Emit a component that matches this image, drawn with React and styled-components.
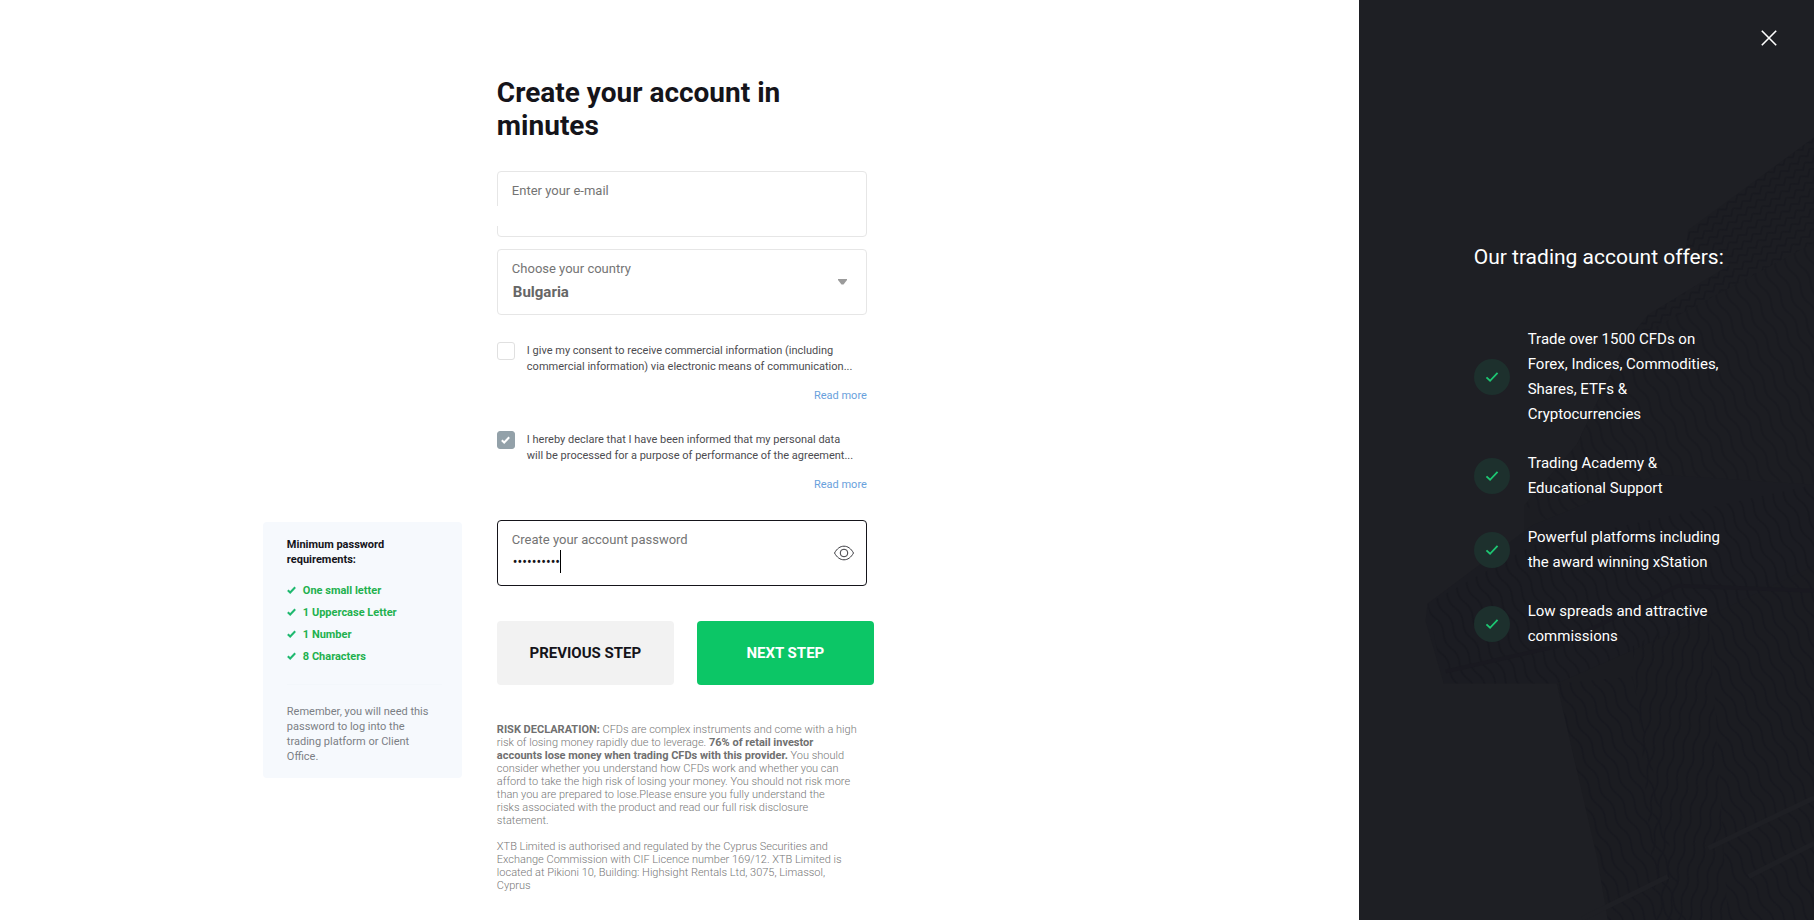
import { useState } from 'react';
import styled, { createGlobalStyle, css } from 'styled-components';

const GlobalStyle = createGlobalStyle`
    * {
        box-sizing: border-box;
    }

    body {
        margin: 0;
        background: #fff;
        color: #15141a;
        font-family: Roboto, 'Liberation Sans', sans-serif;
    }

    button, input, select {
        font-family: inherit;
    }
`;

const Page = styled.div`
    display: flex;
    min-height: 100vh;
`;

const Main = styled.main`
    flex: 1;
    display: flex;
    justify-content: center;
    padding: 76px 24px 24px 29px;
`;

const Form = styled.form`
    width: 100%;
    max-width: 370px;
`;

const Heading = styled.h1`
    margin: 0 0 29px;
    font-size: 28px;
    line-height: 33px;
    font-weight: 700;
`;

const Field = styled.div`
    position: relative;
    display: flex;
    flex-direction: column;
    height: 66px;
    margin-bottom: 12px;
    padding: 10px 14px;
    border: 1px solid ${(props) => (props.$focused ? '#15141a' : '#e6e6e6')};
    border-radius: 4px;
`;

const FieldLabel = styled.label`
    font-size: 13px;
    line-height: 18px;
    color: #747474;
`;

const EmailInput = styled.input`
    height: 21px;
    margin: 6px 0 0 -15px;
    padding: 0 16px;
    border: 0;
    outline: 0;
    background: #fff;
    font-size: 15px;
`;

const CountrySelect = styled.select`
    appearance: none;
    height: 26px;
    margin-top: 2px;
    padding: 0 0 0 1px;
    border: 0;
    outline: 0;
    background: transparent;
    color: #666;
    font-size: 15px;
    font-weight: 700;
`;

const PasswordInput = styled.input`
    height: 24px;
    margin-top: 1px;
    padding: 0 40px 0 1px;
    border: 0;
    outline: 0;
    background: transparent;
    color: #15141a;
    font-size: 14px;
`;

const Caret = styled.span`
    position: absolute;
    left: 62px;
    top: 29px;
    width: 1px;
    height: 23px;
    background: #000;
`;

const Arrow = styled.svg`
    position: absolute;
    right: 19px;
    top: 29px;
    pointer-events: none;
`;

const EyeButton = styled.button`
    position: absolute;
    right: 12px;
    top: 24px;
    display: flex;
    padding: 0;
    border: 0;
    background: none;
    cursor: pointer;
`;

const Consents = styled.div`
    margin-top: 27px;
`;

const Consent = styled.div`
    display: flex;
    flex-direction: column;
    height: 89px;
`;

const ConsentLabel = styled.label`
    display: flex;
    gap: 12px;
    font-size: 11px;
    line-height: 16px;
    color: #4c4c50;
    white-space: nowrap;
`;

const ConsentText = styled.span`
    padding-top: 1px;
`;

const CheckBox = styled.input`
    appearance: none;
    flex: none;
    width: 18px;
    height: 18px;
    margin: 0;
    border: 1px solid #e0e0e0;
    border-radius: 3px;
    background: #fff;

    &:checked {
        border-color: #93a1a9;
        background: #93a1a9;
    }
`;

const CheckWrapper = styled.span`
    position: relative;
    display: flex;
    height: 18px;

    svg {
        position: absolute;
        left: 4px;
        top: 5px;
        pointer-events: none;
    }
`;

const ReadMore = styled.a`
    align-self: flex-end;
    margin-top: 13px;
    font-size: 11px;
    line-height: 16px;
    color: #69a1dc;
    text-decoration: none;
`;

const Actions = styled.div`
    display: flex;
    gap: 23px;
    margin: 35px -7px 38px 0;
`;

const StepButton = styled.button`
    flex: 1;
    height: 64px;
    border: 0;
    border-radius: 4px;
    font-size: 15px;
    font-weight: 700;
    cursor: pointer;
    ${(props) =>
        props.$primary
            ? css`
                  background: #0cc666;
                  color: #fff;
              `
            : css`
                  background: #f2f2f2;
                  color: #15141a;
              `}
`;

const Risk = styled.p`
    margin: 0 0 13px;
    font-size: 11px;
    line-height: 13px;
    font-weight: 300;
    color: #777;
    white-space: nowrap;

    strong {
        font-weight: 700;
        color: #707070;
    }
`;

const Hint = styled.aside`
    position: absolute;
    right: calc(100% + 36px);
    top: 1px;
    width: 199px;
    padding: 15px 20px 14px 24px;
    border-radius: 4px;
    background: #f6f9fd;
    font-size: 11px;
    line-height: 15px;
    color: #7b7f85;
`;

const HintTitle = styled.h2`
    margin: 0 0 12px;
    font-size: 11px;
    line-height: 15px;
    font-weight: 700;
    color: #15141a;
`;

const HintList = styled.ul`
    margin: 0 0 17px;
    padding: 0;
    list-style: none;
`;

const HintItem = styled.li`
    display: flex;
    align-items: center;
    gap: 7px;
    height: 22px;
    font-weight: 700;
    color: #1fb14f;
`;

const HintText = styled.p`
    margin: 0;
    padding-top: 19px;
    border-top: 1px solid #f3f7fb;
    white-space: nowrap;
`;

const Side = styled.aside`
    position: relative;
    flex: 0 0 25.1%;
    padding: 242px 0 40px 115px;
    overflow: hidden;
    background: #1e1f24;
    color: #fff;
`;

const Backdrop = styled.svg`
    position: absolute;
    inset: 0;
    width: 100%;
    height: 100%;
`;

const CloseButton = styled.button`
    position: absolute;
    top: 30px;
    right: 37px;
    display: flex;
    padding: 0;
    border: 0;
    background: none;
    cursor: pointer;
`;

const SideContent = styled.div`
    position: relative;
`;

const SideTitle = styled.h2`
    margin: 0 0 55px;
    font-size: 21px;
    line-height: 30px;
    font-weight: 400;
    white-space: nowrap;
`;

const Offers = styled.ul`
    display: flex;
    flex-direction: column;
    gap: 24px;
    margin: 0;
    padding: 0;
    list-style: none;
`;

const Offer = styled.li`
    display: flex;
    align-items: center;
    gap: 18px;
    font-size: 15px;
    line-height: 25px;
    white-space: nowrap;
`;

const Badge = styled.span`
    display: flex;
    align-items: center;
    justify-content: center;
    flex: none;
    width: 36px;
    height: 36px;
    border-radius: 50%;
    background: #1d302d;
`;

const rules = ['One small letter', '1 Uppercase Letter', '1 Number', '8 Characters'];

const offers = [
    ['Trade over 1500 CFDs on', 'Forex, Indices, Commodities,', 'Shares, ETFs &', 'Cryptocurrencies'],
    ['Trading Academy &', 'Educational Support'],
    ['Powerful platforms including', 'the award winning xStation'],
    ['Low spreads and attractive', 'commissions'],
];

const Lines = ({ items }) => (
    <span>
        {items.map((line, index) => (
            <span key={line}>
                {index > 0 && <br />}
                {line}
            </span>
        ))}
    </span>
);

const Tick = ({ width = 9, height = 8, color = '#1fb96f', stroke = 2 }) => (
    <svg width={width} height={height} viewBox="0 0 9 8" fill="none" aria-hidden="true">
        <path d="M0.8 4.2L3.2 6.5L8.2 1.2" stroke={color} strokeWidth={stroke} />
    </svg>
);

const Knit = () => (
    <Backdrop viewBox="0 0 455 920" preserveAspectRatio="xMaxYMid slice" aria-hidden="true">
        <defs>
            <pattern id="ribs" width="11" height="34" patternUnits="userSpaceOnUse" patternTransform="rotate(-28)">
                <path d="M3 0Q7 8 3 17T3 34" fill="none" stroke="#14151c" strokeWidth="2" />
            </pattern>
            <pattern id="ribsDown" width="10" height="30" patternUnits="userSpaceOnUse" patternTransform="rotate(12)">
                <path d="M3 0Q6 8 3 15T3 30" fill="none" stroke="#14151c" strokeWidth="2" />
            </pattern>
            <pattern id="stitches" width="12" height="8" patternUnits="userSpaceOnUse" patternTransform="rotate(-38)">
                <path d="M0 1L6 6L12 1" fill="none" stroke="#15161d" strokeWidth="2" />
            </pattern>
        </defs>
        <g opacity="0.6">
            <path d="M330 228L455 136V400L220 440L268 340L290 312L372 262L328 245Z" fill="#1c1d22" />
            <path d="M330 228L455 136V400L220 440L268 340L290 312L372 262L328 245Z" fill="url(#stitches)" />
            <path d="M268 340L455 240V600L168 625L168 500L220 440Z" fill="#1b1c21" />
            <path d="M268 340L455 240V600L300 590L168 500L220 440Z" fill="url(#ribs)" opacity="0.6" />
            <path d="M176 520L72 598L70 615L88 677H200L330 670L455 560V480L300 470Z" fill="#1a1b21" />
            <path d="M176 540L72 598L88 677H200L330 670L455 560V480Z" fill="url(#ribs)" />
            <path d="M200 677L240 850L252 920H455V560L330 620Z" fill="#1a1b20" />
            <path d="M200 677L240 850L252 920H330L275 670Z" fill="url(#ribs)" />
            <path d="M275 640L300 920H370L350 600Z" fill="url(#ribsDown)" />
            <path d="M350 580L370 920H455V560Z" fill="url(#ribs)" />
            <path d="M90 665L200 640L320 580L455 585" fill="none" stroke="#16161e" strokeWidth="4" />
            <path d="M225 910L310 868M350 840L455 790M390 868L455 835" fill="none" stroke="#1e1f24" strokeWidth="5" />
        </g>
    </Backdrop>
);

export default function App() {
    const [email, setEmail] = useState('');
    const [password, setPassword] = useState('Password12');
    const [visible, setVisible] = useState(false);

    return (
        <Page>
            <GlobalStyle />
            <Main>
                <Form onSubmit={(e) => e.preventDefault()}>
                    <Heading>
                        Create your account in
                        <br />
                        minutes
                    </Heading>

                    <Field>
                        <FieldLabel htmlFor="email">Enter your e-mail</FieldLabel>
                        <EmailInput id="email" type="email" value={email} onChange={(e) => setEmail(e.target.value)} />
                    </Field>

                    <Field>
                        <FieldLabel htmlFor="country">Choose your country</FieldLabel>
                        <CountrySelect id="country" defaultValue="Bulgaria">
                            <option>Bulgaria</option>
                        </CountrySelect>
                        <Arrow width="9" height="6" viewBox="0 0 9 6" aria-hidden="true">
                            <path d="M0 0H9V1L5.5 5.5H3.5L0 1Z" fill="#9b9b9b" />
                        </Arrow>
                    </Field>

                    <Consents>
                        <Consent>
                            <ConsentLabel>
                                <CheckWrapper>
                                    <CheckBox type="checkbox" />
                                </CheckWrapper>
                                <ConsentText>
                                    I give my consent to receive commercial information (including
                                    <br />
                                    commercial information) via electronic means of communication...
                                </ConsentText>
                            </ConsentLabel>
                            <ReadMore href="#marketing">Read more</ReadMore>
                        </Consent>

                        <Consent>
                            <ConsentLabel>
                                <CheckWrapper>
                                    <CheckBox type="checkbox" defaultChecked />
                                    <Tick color="#fff" />
                                </CheckWrapper>
                                <ConsentText>
                                    I hereby declare that I have been informed that my personal data
                                    <br />
                                    will be processed for a purpose of performance of the agreement...
                                </ConsentText>
                            </ConsentLabel>
                            <ReadMore href="#personal-data">Read more</ReadMore>
                        </Consent>
                    </Consents>

                    <Field $focused>
                        <FieldLabel htmlFor="password">Create your account password</FieldLabel>
                        <PasswordInput
                            id="password"
                            type={visible ? 'text' : 'password'}
                            value={password}
                            onChange={(e) => setPassword(e.target.value)}
                        />
                        <Caret />
                        <EyeButton type="button" aria-label="Show password" onClick={() => setVisible(!visible)}>
                            <svg width="20" height="16" viewBox="0 0 20 16" fill="none" stroke="#3b3b40">
                                <path d="M0.5 8C3 3.5 6.2 1.2 10 1.2S17 3.5 19.5 8C17 12.5 13.8 14.8 10 14.8S3 12.5 0.5 8Z" />
                                <circle cx="10" cy="8" r="3.8" />
                            </svg>
                        </EyeButton>

                        <Hint>
                            <HintTitle>
                                Minimum password
                                <br />
                                requirements:
                            </HintTitle>
                            <HintList>
                                {rules.map((rule) => (
                                    <HintItem key={rule}>
                                        <Tick />
                                        {rule}
                                    </HintItem>
                                ))}
                            </HintList>
                            <HintText>
                                Remember, you will need this
                                <br />
                                password to log into the
                                <br />
                                trading platform or Client
                                <br />
                                Office.
                            </HintText>
                        </Hint>
                    </Field>

                    <Actions>
                        <StepButton type="button">PREVIOUS STEP</StepButton>
                        <StepButton type="submit" $primary>
                            NEXT STEP
                        </StepButton>
                    </Actions>

                    <Risk>
                        <strong>RISK DECLARATION:</strong> CFDs are complex instruments and come with a high
                        <br />
                        risk of losing money rapidly due to leverage. <strong>76% of retail investor</strong>
                        <br />
                        <strong>accounts lose money when trading CFDs with this provider.</strong> You should
                        <br />
                        consider whether you understand how CFDs work and whether you can
                        <br />
                        afford to take the high risk of losing your money. You should not risk more
                        <br />
                        than you are prepared to lose.Please ensure you fully understand the
                        <br />
                        risks associated with the product and read our full risk disclosure
                        <br />
                        statement.
                    </Risk>
                    <Risk>
                        XTB Limited is authorised and regulated by the Cyprus Securities and
                        <br />
                        Exchange Commission with CIF Licence number 169/12. XTB Limited is
                        <br />
                        located at Pikioni 10, Building: Highsight Rentals Ltd, 3075, Limassol,
                        <br />
                        Cyprus
                    </Risk>
                </Form>
            </Main>

            <Side>
                <Knit />
                <CloseButton type="button" aria-label="Close">
                    <svg width="16" height="16" viewBox="0 0 16 16" stroke="#fff" strokeWidth="1.6">
                        <path d="M0.8 0.8L15.2 15.2M15.2 0.8L0.8 15.2" />
                    </svg>
                </CloseButton>
                <SideContent>
                    <SideTitle>Our trading account offers:</SideTitle>
                    <Offers>
                        {offers.map((lines) => (
                            <Offer key={lines[0]}>
                                <Badge>
                                    <Tick width={14} height={12} color="#1dc773" stroke={1.2} />
                                </Badge>
                                <Lines items={lines} />
                            </Offer>
                        ))}
                    </Offers>
                </SideContent>
            </Side>
        </Page>
    );
}
